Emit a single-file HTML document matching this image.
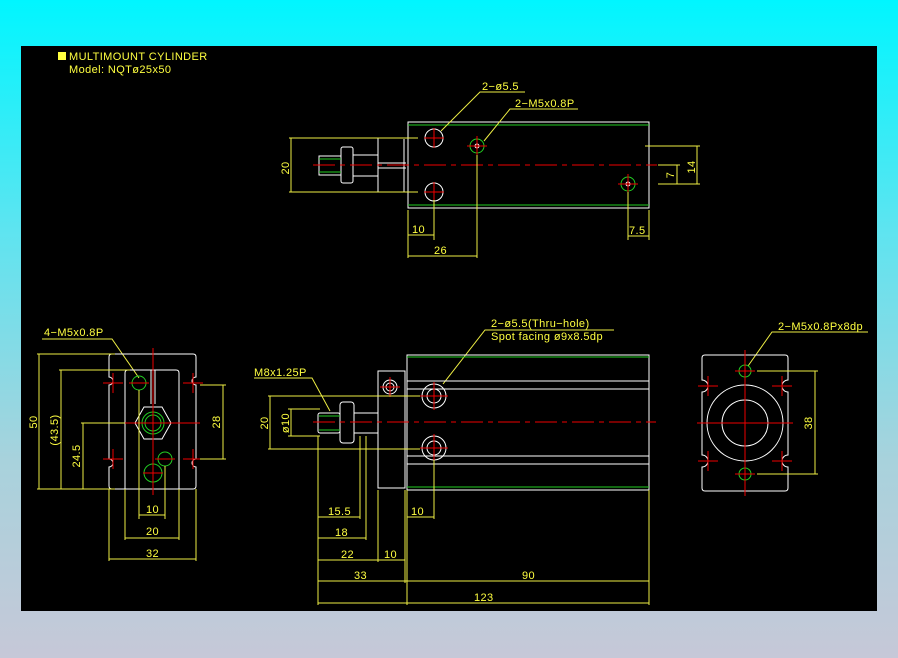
<!DOCTYPE html>
<html><head><meta charset="utf-8"><style>
html,body{margin:0;padding:0;width:898px;height:658px;overflow:hidden;background:linear-gradient(#00f6ff 0%,#5ee4f0 35%,#a8d2dc 70%,#c6c8d8 100%);}
svg{position:absolute;left:0;top:0}
text{font-family:"Liberation Sans",sans-serif;font-size:11px;fill:#ffff40;letter-spacing:0.4px}
</style></head><body>
<svg width="898" height="658" viewBox="0 0 898 658">
<rect x="21" y="46" width="856" height="565" fill="#000"/>
<rect x="58" y="52" width="8" height="8" fill="#ffff40"/>
<text x="69" y="60" font-size="10">MULTIMOUNT  CYLINDER</text>
<text x="69" y="73" font-size="10">Model: NQTø25x50</text>

<g fill="none" stroke-width="1">
<g stroke="#fff">
<rect x="408" y="122" width="241" height="86"/>
<rect x="319" y="156" width="22" height="19"/>
<rect x="341" y="147" width="12" height="36" rx="2"/>
<rect x="353" y="155" width="25" height="21"/>
<line x1="378" y1="163" x2="406" y2="163"/><line x1="378" y1="168" x2="406" y2="168"/>
<line x1="378" y1="138" x2="378" y2="192"/><line x1="404" y1="139" x2="404" y2="192"/>
<circle cx="434" cy="138" r="9"/><circle cx="434" cy="192" r="9"/>
<circle cx="477" cy="146" r="2"/><circle cx="628" cy="184" r="2"/>
</g>
<g stroke="#2c2"><line x1="408" y1="125" x2="649" y2="125"/><line x1="408" y1="205" x2="649" y2="205"/>
<line x1="319" y1="159" x2="341" y2="159"/><line x1="319" y1="172" x2="341" y2="172"/>
<circle cx="477" cy="146" r="7"/><circle cx="628" cy="184" r="7"/></g>
<g stroke="#e00"><line x1="313" y1="165" x2="657" y2="165" stroke-dasharray="22,5,5,5"/>
<path d="M424 138h20M434 128v20M424 192h20M434 182v20M467 146h20M477 136v20M618 184h20M628 174v20"/></g>
<g stroke="#ee4">
<path d="M289 138H418M289 192H418M291 138V192M408 210V258M434 200V240M477 155V258M649 210V240M628 192V240M408 235H434M408 256H477M628 236H649M645 146H700M658 184H700M658 165H680M697 146V184M677 165V184"/>
<path d="M441 131L480 92H525M484 141L510 109H578"/>
<path d="M42 339H112L139 378M254 378H312L330 411M614 330H485L443 384M868 332H772L748 366"/>
</g>
</g>
<text x="0" y="0" transform="translate(289,168) rotate(-90)" text-anchor="middle">20</text>
<text x="0" y="0" transform="translate(695,167) rotate(-90)" text-anchor="middle">14</text>
<text x="0" y="0" transform="translate(674,175) rotate(-90)" text-anchor="middle">7</text>
<text x="412" y="233">10</text><text x="434" y="254">26</text><text x="629" y="234">7.5</text>
<text x="482" y="90">2−ø5.5</text><text x="515" y="107">2−M5x0.8P</text>

<g fill="none" stroke="#fff">
<rect x="407" y="355" width="242" height="135"/>
<path d="M407 381H649M407 389H649M407 456H649M407 464H649"/>
<rect x="378" y="371" width="27" height="117"/>
<circle cx="390" cy="387" r="7"/><circle cx="390" cy="387" r="4"/>
<circle cx="434" cy="396" r="12"/><circle cx="434" cy="396" r="7"/>
<circle cx="434" cy="448" r="12"/><circle cx="434" cy="448" r="7"/>
<rect x="318" y="413" width="22" height="20" rx="2"/>
<rect x="340" y="402" width="14" height="41" rx="3"/>
<rect x="354" y="413" width="24" height="20"/>
</g>
<g stroke="#2c2" fill="none"><path d="M407 357H649M407 487H649M319 416H340M319 430H340"/></g>
<g stroke="#e00" fill="none"><line x1="313" y1="422" x2="656" y2="422" stroke-dasharray="22,5,5,5"/>
<path d="M380 387h20M390 377v20M420 396h28M434 382v28M420 448h28M434 434v28"/></g>
<g stroke="#ee4" fill="none">
<path d="M268 396H420M268 449H420M270 396V449M288 409H320M288 436H320M291 409V436"/>
<path d="M318 436V605M360 436V519M366 436V540M378 490V562M405 490V583M407 490V605M434 460V519M649 490V605"/>
<path d="M318 517H360M318 538H366M318 560H405M318 581H649M318 603H649M407 517H434"/>
</g>
<text x="0" y="0" transform="translate(268,423) rotate(-90)" text-anchor="middle">20</text>
<text x="0" y="0" transform="translate(289,423) rotate(-90)" text-anchor="middle">ø10</text>
<text x="254" y="376">M8x1.25P</text>
<text x="491" y="327">2−ø5.5(Thru−hole)</text>
<text x="491" y="340">Spot  facing  ø9x8.5dp</text>
<text x="328" y="515">15.5</text><text x="335" y="536">18</text><text x="341" y="558">22</text><text x="384" y="558">10</text>
<text x="411" y="515">10</text><text x="354" y="579">33</text><text x="522" y="579">90</text><text x="474" y="601">123</text>

<g fill="none" stroke="#fff">
<path d="M112 354H193Q196 354 196 357V377A4 4 0 0 0 196 385V459A4 4 0 0 0 196 467V486Q196 489 193 489H112Q109 489 109 486V467A4 4 0 0 0 109 459V385A4 4 0 0 0 109 377V357Q109 354 112 354Z"/>
<path d="M125 489V373Q125 370 128 370H176Q179 370 179 373V489"/>
<polygon points="135,423 144,407 162,407 171,423 162,439 144,439"/>
<path d="M151 370V404M155 370V404"/>
</g>
<g fill="none" stroke="#2c2"><circle cx="153" cy="423" r="11"/><circle cx="153" cy="423" r="8"/>
<circle cx="139" cy="383" r="7"/><circle cx="165" cy="459" r="7"/><circle cx="153" cy="473" r="9"/></g>
<g stroke="#e00" fill="none"><path d="M109 423H200M153 348V495M103 383h20M113 373v20M183 383h20M193 373v20M103 459h20M113 449v20M183 459h20M193 449v20M129 383h20M155 459h20M143 473h20"/></g>
<g stroke="#ee4" fill="none">
<path d="M37 354H115M37 489H115M39 354V489M59 370H130M61 370V489M81 423H125M83 423V489M200 385H226M200 459H226M223 385V459"/>
<path d="M139 390V519M165 466V519M125 489V540M179 489V540M109 489V561M196 489V561M139 515H165M125 538H179M109 559H196"/>
</g>
<text x="0" y="0" transform="translate(37,422) rotate(-90)" text-anchor="middle">50</text>
<text x="0" y="0" transform="translate(58,430) rotate(-90)" text-anchor="middle">(43.5)</text>
<text x="0" y="0" transform="translate(80,456) rotate(-90)" text-anchor="middle">24.5</text>
<text x="0" y="0" transform="translate(220,422) rotate(-90)" text-anchor="middle">28</text>
<text x="146" y="513">10</text><text x="146" y="535">20</text><text x="146" y="557">32</text>
<text x="44" y="336">4−M5x0.8P</text>

<g fill="none" stroke="#fff">
<path d="M705 355H785Q788 355 788 358V380A5 5 0 0 0 788 392V455A5 5 0 0 0 788 467V488Q788 491 785 491H705Q702 491 702 488V467A5 5 0 0 0 702 455V392A5 5 0 0 0 702 380V358Q702 355 705 355Z"/>
<circle cx="745" cy="423" r="38"/><circle cx="745" cy="423" r="23"/>
</g>
<g fill="none" stroke="#2c2"><circle cx="745" cy="371" r="6"/><circle cx="745" cy="474" r="6"/></g>
<g stroke="#e00" fill="none"><path d="M697 423H793M745 350V496M698 386h20M708 376v20M772 386h20M782 376v20M698 461h20M708 451v20M772 461h20M782 451v20M735 371h20M735 474h20"/></g>
<g stroke="#ee4" fill="none"><path d="M757 371H818M757 474H818M815 371V474"/></g>
<text x="0" y="0" transform="translate(812,423) rotate(-90)" text-anchor="middle">38</text>
<text x="778" y="330">2−M5x0.8Px8dp</text>
</svg>
</body></html>
